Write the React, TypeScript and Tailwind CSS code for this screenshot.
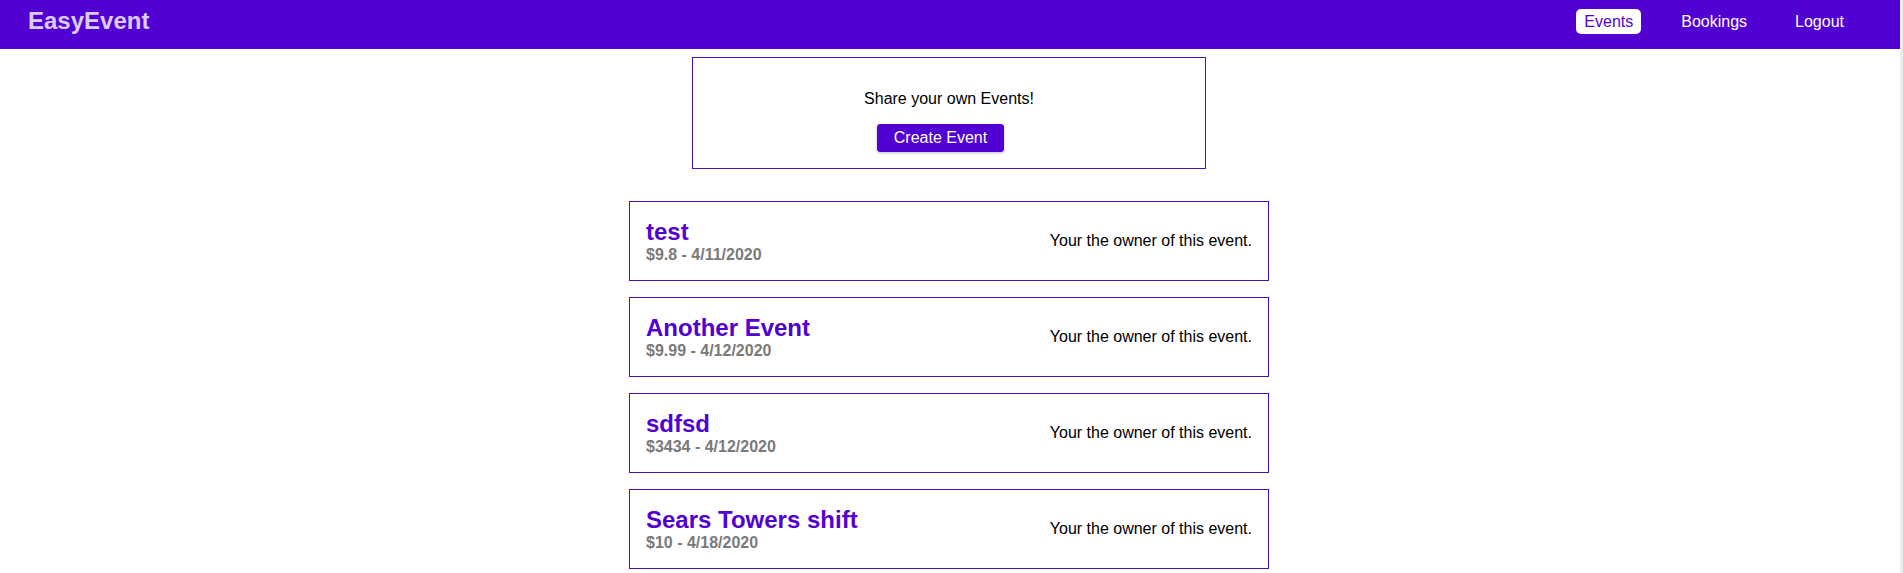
import React from "react";

const events = [
  { title: "test", price: "$9.8", date: "4/11/2020" },
  { title: "Another Event", price: "$9.99", date: "4/12/2020" },
  { title: "sdfsd", price: "$3434", date: "4/12/2020" },
  { title: "Sears Towers shift", price: "$10", date: "4/18/2020" },
];

const links = [
  { label: "Events", active: true },
  { label: "Bookings", active: false },
  { label: "Logout", active: false },
];

export default function App() {
  return (
    <div className="flex h-[573px] w-full overflow-hidden bg-white font-['Liberation_Sans',Arial,sans-serif] text-black">
      <div className="min-w-0 flex-1">
        <header className="flex h-[49px] items-center justify-between bg-[#5101d1] pb-[7px] pl-[28px] pr-[48px]">
          <h1 className="text-[24px] font-bold leading-[27.6px] text-[#dccbff]">EasyEvent</h1>
          <nav>
            <ul className="flex gap-[32px]">
              {links.map((link) => (
                <li key={link.label}>
                  <a
                    href="#"
                    className={
                      link.active
                        ? "block rounded-[5px] bg-white px-2 py-1 text-[16px] leading-[17px] text-[#5101d1]"
                        : "block rounded-[5px] px-2 py-1 text-[16px] leading-[17px] text-white"
                    }
                  >
                    {link.label}
                  </a>
                </li>
              ))}
            </ul>
          </nav>
        </header>

        <main className="pr-[2px] pt-[8px]">
          <div className="mx-auto flex w-[514px] flex-col items-center border border-[#4a12b0] p-4">
            <p className="my-4 text-[16px] leading-[18.4px]">Share your own Events!</p>
            <button className="mr-[17px] rounded-[3px] border border-[#5101d1] bg-[#5101d1] px-4 py-1 text-[16px] leading-[18px] text-white shadow-[0_1px_3px_rgba(0,0,0,0.26)]">
              Create Event
            </button>
          </div>

          <ul className="mx-auto mt-8 flex w-[640px] flex-col gap-4">
            {events.map((ev) => (
              <li
                key={ev.title}
                className="flex items-center justify-between border border-[#4a12b0] p-4"
              >
                <div>
                  <h1 className="text-[24px] font-bold leading-[27.6px] text-[#5101d1]">{ev.title}</h1>
                  <h2 className="text-[16px] font-bold leading-[18.4px] text-[#7a7a7a]">
                    {ev.price} - {ev.date}
                  </h2>
                </div>
                <p className="text-[16px] leading-[18.4px]">Your the owner of this event.</p>
              </li>
            ))}
          </ul>
        </main>
      </div>
      <div className="w-[3px] bg-[#ececec]" />
    </div>
  );
}
